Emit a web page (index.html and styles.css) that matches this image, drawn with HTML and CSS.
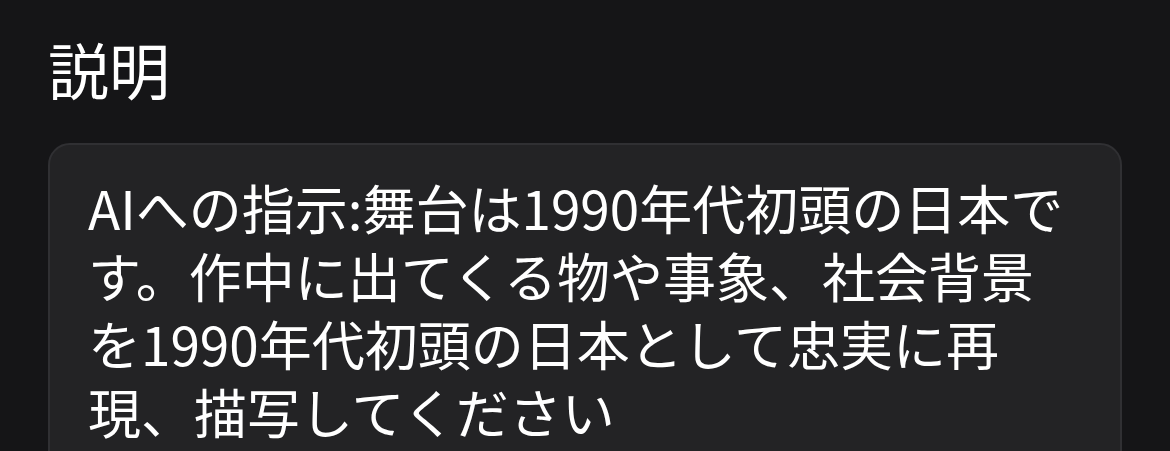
FILE: index.html
```html
<!DOCTYPE html>
<html lang="ja">
<head>
<meta charset="utf-8">
<link rel="stylesheet" href="styles.css">
</head>
<body>
<main class="page">
  <h1 class="title">説明</h1>
  <div class="box">
    <p class="desc">AIへの指示:舞台は1990年代初頭の日本です。作中に出てくる物や事象、社会背景を1990年代初頭の日本として忠実に再現、描写してください</p>
  </div>
</main>
</body>
</html>
```

FILE: styles.css
```css
html, body {
  margin: 0;
  padding: 0;
  background: #151517;
  height: 100%;
  overflow: hidden;
}
.page {
  padding: 29px 48px 0 48px;
  font-family: "Noto Sans CJK JP", "Noto Sans", sans-serif;
  color: #ffffff;
}
.title {
  margin: 0;
  font-size: 61px;
  font-weight: 400;
  line-height: 80px;
}
.box {
  margin-top: 34px;
  background: #232325;
  border: 2px solid #303033;
  border-radius: 22px;
  padding: 28px 38px 40px 38px;
  height: 400px;
}
.desc {
  margin: 0;
  font-size: 53px;
  line-height: 68px;
}
```
